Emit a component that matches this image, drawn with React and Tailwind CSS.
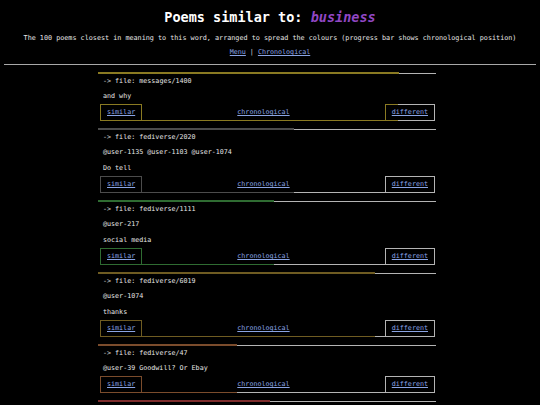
import React from 'react';

const poems = [
  { file: 'messages/1400', lines: ['and why'], color: '#8a7a22', pos: 89 },
  { file: 'fediverse/2020', lines: ['@user-1135 @user-1103 @user-1074', 'Do tell'], color: '#4c4c4c', pos: 58 },
  { file: 'fediverse/1111', lines: ['@user-217', 'social media'], color: '#2f6c32', pos: 52 },
  { file: 'fediverse/6019', lines: ['@user-1074', 'thanks'], color: '#6f5c22', pos: 82 },
  { file: 'fediverse/47', lines: ['@user-39 Goodwill? Or Ebay'], color: '#7b4c2c', pos: 41 },
];

// the next entry only shows its bar above the fold
const nextBar = { color: '#7e2c2c', pos: 51 };

const REST = '#b4b4b4';

function ProgressBar({ color, pos }) {
  return (
    <div className="flex items-end h-[2px]">
      <div className="h-[2px]" style={{ width: `${pos}%`, background: color }} />
      <div className="h-px flex-1 bg-[#b4b4b4]" />
    </div>
  );
}

function Poem({ poem }) {
  const edge = `linear-gradient(to right, ${poem.color} ${poem.pos}%, ${REST} ${poem.pos}%)`;
  return (
    <div className="mb-[7px]">
      <ProgressBar color={poem.color} pos={poem.pos} />
      <div className="h-[14px] flex items-center pl-[5px]">-&gt; file: {poem.file}</div>
      {poem.lines.map((line, i) => (
        <div key={i} className="h-4 flex items-center pl-[5px]">{line}</div>
      ))}
      {/* nav row: the gradient behind shows through as borders and the bottom line */}
      <div className="flex h-[17px] ml-[2px] mr-px" style={{ background: edge }}>
        <a href="#" className="m-px bg-black px-[6px] flex items-center underline text-[#8aa4e4]">similar</a>
        <div className="flex-1 mb-px bg-black flex items-center justify-center">
          <a href="#" className="underline text-[#8aa4e4]">chronological</a>
        </div>
        <a href="#" className="m-px bg-black px-[6px] flex items-center underline text-[#8aa4e4]">different</a>
      </div>
    </div>
  );
}

export default function App() {
  return (
    <div className="min-h-screen bg-black text-[#e6e6e6] font-['DejaVu_Sans_Mono',monospace] text-[6.7px] overflow-hidden">
      <header className="text-center pt-[8px]">
        <h1 className="text-[13.5px] leading-[18px] font-bold text-white">
          Poems similar to: <em className="text-[#9147c4]">business</em>
        </h1>
        <p className="mt-[7px] leading-[10px] text-[6.77px]">
          The 100 poems closest in meaning to this word, arranged to spread the colours (progress bar shows chronological position)
        </p>
        <p className="mt-[4px] leading-[10px]">
          <a href="#" className="underline text-[#8aa4e4]">Menu</a>
          <span className="mx-[4px] text-[#dddddd]">|</span>
          <a href="#" className="underline text-[#8aa4e4]">Chronological</a>
        </p>
      </header>
      <div className="mx-1 mt-[7px] h-px bg-[#a8a8a8]" />
      <main className="ml-[98px] w-[338px] mt-[7px]">
        {poems.map((p) => (
          <Poem key={p.file} poem={p} />
        ))}
        <ProgressBar color={nextBar.color} pos={nextBar.pos} />
      </main>
    </div>
  );
}
